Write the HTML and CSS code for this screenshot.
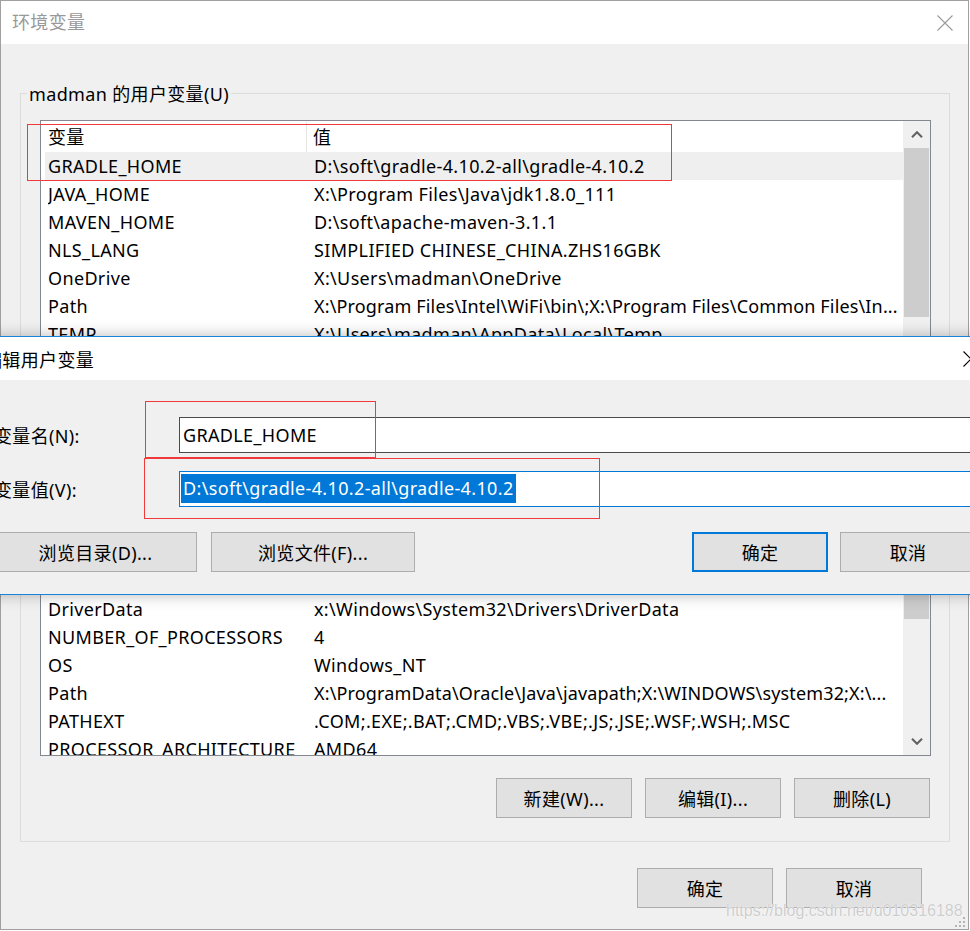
FILE: index.html
```html
<!DOCTYPE html>
<html lang="zh-CN">
<head>
<meta charset="utf-8">
<title>环境变量</title>
<link rel="stylesheet" href="styles.css">
</head>
<body>
<div class="window">
  <div class="titlebar">
    <span class="title">环境变量</span>
    <span class="close"><svg width="16" height="16" viewBox="0 0 16 16"><path d="M0.5 0.5 L15.5 15.5 M15.5 0.5 L0.5 15.5" stroke="#9a9a9a" stroke-width="1.1" fill="none"/></svg></span>
  </div>
  <div class="content">
    <div class="group">
      <div class="group-label">madman 的用户变量(U)</div>
      <div class="list list-user">
        <div class="list-body">
          <div class="list-header"><span class="h1">变量</span><span class="h2">值</span></div>
          <div class="row selected"><span class="c1">GRADLE_HOME</span><span class="c2">D:\soft\gradle-4.10.2-all\gradle-4.10.2</span></div>
          <div class="row"><span class="c1">JAVA_HOME</span><span class="c2">X:\Program Files\Java\jdk1.8.0_111</span></div>
          <div class="row"><span class="c1">MAVEN_HOME</span><span class="c2">D:\soft\apache-maven-3.1.1</span></div>
          <div class="row"><span class="c1">NLS_LANG</span><span class="c2">SIMPLIFIED CHINESE_CHINA.ZHS16GBK</span></div>
          <div class="row"><span class="c1">OneDrive</span><span class="c2">X:\Users\madman\OneDrive</span></div>
          <div class="row"><span class="c1">Path</span><span class="c2 tight">X:\Program Files\Intel\WiFi\bin\;X:\Program Files\Common Files\In...</span></div>
          <div class="row"><span class="c1">TEMP</span><span class="c2">X:\Users\madman\AppData\Local\Temp</span></div>
        </div>
        <div class="vscroll">
          <div class="arrow"><svg width="12" height="7" viewBox="0 0 12 7"><path d="M1 6.2 L6 1.2 L11 6.2" stroke="#606060" stroke-width="2" fill="none"/></svg></div>
          <div class="thumb thumb-user"></div>
        </div>
      </div>
      <div class="list list-system">
        <div class="list-body">
          <div class="row"><span class="c1">DriverData</span><span class="c2">x:\Windows\System32\Drivers\DriverData</span></div>
          <div class="row"><span class="c1">NUMBER_OF_PROCESSORS</span><span class="c2">4</span></div>
          <div class="row"><span class="c1">OS</span><span class="c2">Windows_NT</span></div>
          <div class="row"><span class="c1">Path</span><span class="c2 tight">X:\ProgramData\Oracle\Java\javapath;X:\WINDOWS\system32;X:\...</span></div>
          <div class="row"><span class="c1">PATHEXT</span><span class="c2">.COM;.EXE;.BAT;.CMD;.VBS;.VBE;.JS;.JSE;.WSF;.WSH;.MSC</span></div>
          <div class="row"><span class="c1">PROCESSOR_ARCHITECTURE</span><span class="c2">AMD64</span></div>
        </div>
        <div class="vscroll">
          <div class="thumb thumb-sys"></div>
          <div class="track"></div>
          <div class="arrow"><svg width="12" height="7" viewBox="0 0 12 7"><path d="M1 0.8 L6 5.8 L11 0.8" stroke="#606060" stroke-width="2" fill="none"/></svg></div>
        </div>
      </div>
      <div class="btn-row">
        <button class="btn">新建(W)...</button>
        <button class="btn">编辑(I)...</button>
        <button class="btn">删除(L)</button>
      </div>
    </div>
    <div class="footer">
      <button class="btn">确定</button>
      <button class="btn">取消</button>
    </div>
  </div>
</div>

<div class="dialog">
  <div class="dlg-title">
    <span>编辑用户变量</span>
    <span class="close"><svg width="16" height="16" viewBox="0 0 16 16"><path d="M0.5 0.5 L15.5 15.5 M15.5 0.5 L0.5 15.5" stroke="#000" stroke-width="1.1" fill="none"/></svg></span>
  </div>
  <div class="dlg-body">
    <div class="field">
      <span class="field-label">变量名(N):</span>
      <div class="textbox">GRADLE_HOME</div>
    </div>
    <div class="field">
      <span class="field-label">变量值(V):</span>
      <div class="textbox focus"><span class="sel">D:\soft\gradle-4.10.2-all\gradle-4.10.2</span></div>
    </div>
    <div class="dlg-buttons">
      <button class="btn btn-wide">浏览目录(D)...</button>
      <button class="btn btn-wide2">浏览文件(F)...</button>
      <button class="btn default push">确定</button>
      <button class="btn">取消</button>
    </div>
  </div>
</div>

<div class="mark mark-list"></div>
<div class="mark mark-name"></div>
<div class="mark mark-value"></div>

<div class="watermark">https://blog.csdn.net/u010316188</div>
<svg class="grip" width="12" height="11" viewBox="0 0 12 11">
  <rect x="8" y="0" width="2" height="2" fill="#b5b5b5"/>
  <rect x="4" y="4" width="2" height="2" fill="#b5b5b5"/>
  <rect x="8" y="4" width="2" height="2" fill="#b5b5b5"/>
  <rect x="0" y="8" width="2" height="2" fill="#b5b5b5"/>
  <rect x="4" y="8" width="2" height="2" fill="#b5b5b5"/>
  <rect x="8" y="8" width="2" height="2" fill="#b5b5b5"/>
</svg>
</body>
</html>
```

FILE: styles.css
```css
* { box-sizing: border-box; }
html, body { margin: 0; padding: 0; }
body {
  width: 970px;
  height: 931px;
  overflow: hidden;
  position: relative;
  background: #ffffff;
  font-family: "Noto Sans", "Noto Sans CJK SC", sans-serif;
  font-size: 18px;
  letter-spacing: 0.35px;
  color: #000;
}

.window {
  width: 969px;
  height: 930px;
  border: 1px solid #a0a0a0;
  background: #f0f0f0;
  display: flex;
  flex-direction: column;
}
.titlebar {
  height: 43px;
  flex: none;
  background: #fff;
  display: flex;
  align-items: center;
  justify-content: space-between;
  padding: 0 15px 0 11px;
}
.title { color: #999; line-height: 43px; }
.close svg { display: block; }

.content { flex: 1; padding: 49px 18px 0 19px; }

.group {
  border: 1px solid #dcdcdc;
  padding: 0 18px 23px 19px;
}
.group-label {
  width: fit-content;
  margin: -12px 0 0 -13px;
  padding: 0 2px;
  background: #f0f0f0;
  line-height: 24px;
  white-space: nowrap;
}

.list {
  display: flex;
  border: 1px solid #828790;
  background: #fff;
}
.list-user { margin-top: 14px; height: 240px; }
.list-system { margin-top: 234px; height: 162px; }
.list-body { flex: 1; min-width: 0; overflow: hidden; }

.list-header {
  display: flex;
  height: 31px;
  line-height: 31px;
  padding: 1px 0 0 7px;
}
.h1 { width: 259px; border-right: 1px solid #e5e5e5; }
.h2 { padding-left: 6px; }

.row {
  display: flex;
  height: 28px;
  line-height: 28px;
  margin-left: 4px;
  padding-left: 3px;
  white-space: nowrap;
}
.row.selected { background: #efefef; }
.c1 { width: 266px; flex: none; overflow: hidden; }
.c2 { flex: 1; overflow: hidden; }
.c2.tight { letter-spacing: 0.15px; }

.vscroll {
  width: 27px;
  flex: none;
  background: #f0f0f0;
  display: flex;
  flex-direction: column;
  padding: 0 1px;
}
.arrow {
  height: 27px;
  flex: none;
  display: flex;
  align-items: center;
  justify-content: center;
}
.arrow svg { display: block; }
.thumb { background: #cdcdcd; flex: none; }
.thumb-user { height: 169px; }
.thumb-sys { height: 24px; }
.track { flex: 1; }

.btn {
  width: 136px;
  height: 40px;
  border: 1px solid #adadad;
  background: #e1e1e1;
  font: inherit;
  letter-spacing: inherit;
  color: #000;
  padding: 0;
  margin: 0;
}
.btn-row {
  margin-top: 22px;
  display: flex;
  justify-content: flex-end;
  gap: 13px;
  padding-right: 1px;
}
.footer {
  margin-top: 26px;
  display: flex;
  justify-content: flex-end;
  gap: 13px;
  padding-right: 28px;
}

.dialog {
  position: absolute;
  left: -28px;
  top: 336px;
  width: 1034px;
  border: 1px solid #1883d7;
  background: #f0f0f0;
  box-shadow: 0 0 14px rgba(0, 0, 0, 0.28);
  z-index: 2;
}
.dlg-title {
  height: 43px;
  background: #fff;
  display: flex;
  align-items: center;
  justify-content: space-between;
  padding: 0 26px 0 11px;
  white-space: nowrap;
}
.dlg-body { padding: 37px 29px 22px 21px; }
.field { display: flex; align-items: center; height: 36px; }
.field + .field { margin-top: 18px; }
.field-label { width: 185px; flex: none; white-space: nowrap; }
.textbox {
  flex: 1;
  height: 36px;
  border: 1px solid #4a4a4a;
  background: #fff;
  padding-left: 3px;
  line-height: 34px;
  white-space: nowrap;
  overflow: hidden;
}
.textbox.focus {
  border-color: #0078d7;
  padding: 2px 0 0 1px;
  line-height: 29px;
}
.sel {
  display: inline-block;
  vertical-align: top;
  background: #0078d7;
  color: #fff;
  padding: 0 2px;
  line-height: 29px;
}
.dlg-buttons { display: flex; margin-top: 25px; gap: 14px; }
.dlg-buttons .btn + .btn.push { margin-left: auto; }
.dlg-buttons .push + .btn { margin-left: -2px; }
.btn-wide { width: 203px; }
.btn-wide2 { width: 204px; }
.btn.default { border: 2px solid #0078d7; }

.mark {
  position: absolute;
  border: 1px solid #f03a3a;
  z-index: 3;
}
.mark-list { left: 27px; top: 124px; width: 645px; height: 57px; }
.mark-name { left: 145px; top: 401px; width: 231px; height: 57px; }
.mark-value { left: 144px; top: 458px; width: 456px; height: 61px; }

.watermark {
  position: absolute;
  left: 726px;
  top: 903px;
  font-family: "Liberation Sans", Arial, sans-serif;
  font-size: 16px;
  line-height: 16px;
  letter-spacing: 0;
  color: #cdcdcd;
  text-shadow: 0 0 1px #fff, 0 0 1px #fff;
  white-space: nowrap;
  z-index: 4;
}
.grip {
  position: absolute;
  left: 955px;
  top: 917px;
  display: block;
}
```
